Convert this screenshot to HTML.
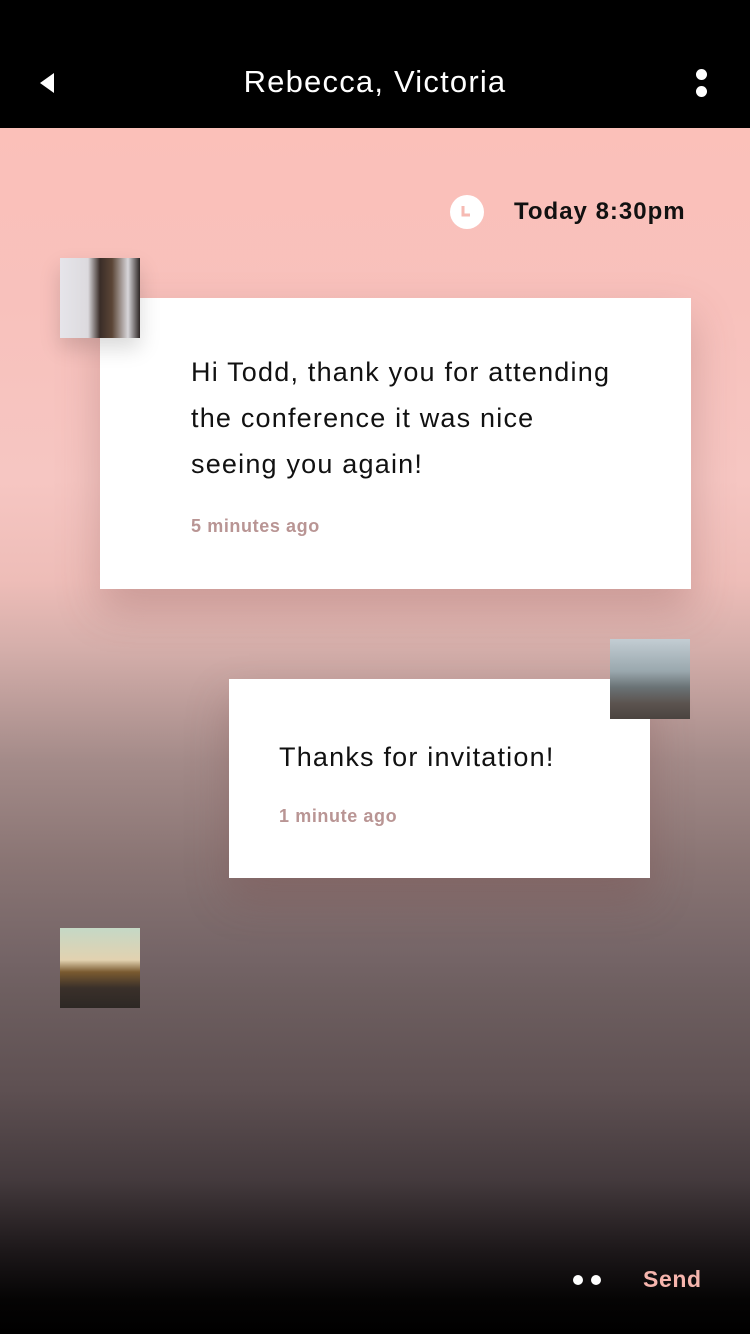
<!DOCTYPE html>
<html><head><style>
body{margin:0;width:750px;height:1334px;overflow:hidden;font-family:"Liberation Sans",sans-serif;position:relative;
background:linear-gradient(to bottom,#000 0,#000 128px,#fbc0b9 128px,#f8c1bc 300px,#f6c6c2 480px,#eebdb8 580px,#d4aeaa 650px,#a48b89 760px,#8a7574 860px,#746466 960px,#6e5f60 990px,#5e5052 1090px,#443a3d 1180px,#1d181a 1250px,#050404 1300px,#000 1334px);}
.a{position:absolute}
.card{position:absolute;background:#fff;box-shadow:0 20px 40px rgba(120,70,70,.28)}
.msg{font-size:27px;line-height:46px;color:#111;letter-spacing:1.2px}
.time{font-size:18px;font-weight:bold;color:#b99594;letter-spacing:.6px}
.av{position:absolute;width:80px;height:80px}
</style></head><body>
<svg class="a" style="left:40px;top:73px" width="14" height="20"><path d="M14 0V20L0 10Z" fill="#fff"/></svg>
<div class="a" style="left:0;width:750px;top:64px;text-align:center;color:#fff;font-size:31px;letter-spacing:1.2px">Rebecca, Victoria</div>
<div class="a" style="left:696px;top:69px;width:11px;height:11px;border-radius:50%;background:#fff"></div>
<div class="a" style="left:696px;top:86px;width:11px;height:11px;border-radius:50%;background:#fff"></div>
<svg class="a" style="left:450px;top:195px" width="34" height="34"><circle cx="17" cy="17" r="17" fill="#fff"/><path d="M13 11V20H20" stroke="#f6bab3" stroke-width="3" fill="none"/></svg>
<div class="a" style="left:514px;top:198px;font-size:24px;font-weight:bold;color:#111;letter-spacing:1px">Today 8:30pm</div>
<div class="card" style="left:100px;top:298px;width:591px;height:291px">
<div class="a msg" style="left:91px;top:51px">Hi Todd, thank you for attending<br>the conference it was nice<br>seeing you again!</div>
<div class="a time" style="left:91px;top:218px">5 minutes ago</div></div>
<div class="av" style="left:60px;top:258px;background:linear-gradient(90deg,#e6e5ea 0,#dcdade 35%,#3a2d28 50%,#5b4536 65%,#d8d6da 85%,#2d2524 100%);box-shadow:0 10px 20px rgba(0,0,0,.15)"></div>
<div class="card" style="left:229px;top:679px;width:421px;height:199px">
<div class="a msg" style="left:50px;top:55px">Thanks for invitation!</div>
<div class="a time" style="left:50px;top:127px">1 minute ago</div></div>
<div class="av" style="left:610px;top:639px;background:linear-gradient(to bottom,#c3cdd3 0,#9aa8ae 40%,#6a7376 60%,#5c5450 80%,#4a4440 100%)"></div>
<div class="av" style="left:60px;top:928px;background:linear-gradient(to bottom,#c5d8c6 0,#e2d2b0 40%,#7a5a30 55%,#3a302a 75%,#2d2824 100%)"></div>
<div class="a" style="left:573px;top:1275px;width:10px;height:10px;border-radius:50%;background:#fff"></div>
<div class="a" style="left:591px;top:1275px;width:10px;height:10px;border-radius:50%;background:#fff"></div>
<div class="a" style="left:643px;top:1266px;font-size:23px;font-weight:bold;color:#f6b5ad;letter-spacing:.6px">Send</div>
</body></html>
